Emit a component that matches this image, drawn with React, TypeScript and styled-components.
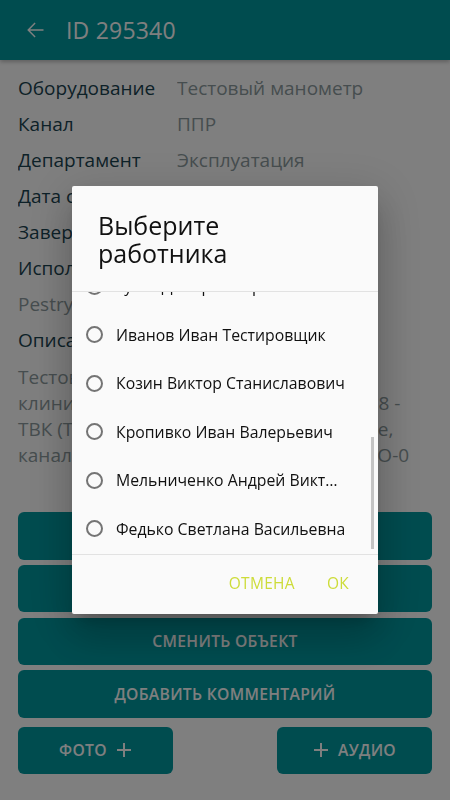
import React from 'react';
import styled, { createGlobalStyle } from 'styled-components';

const GlobalStyle = createGlobalStyle`
  html, body {
    margin: 0;
    padding: 0;
    background: #ffffff;
    overflow: hidden;
  }
  body {
    font-family: "Open Sans", "Noto Sans", sans-serif;
  }
`;

const Screen = styled.main`
  display: flex;
  flex-direction: column;
  height: 100vh;
  background: #ffffff;
`;

const TopBar = styled.header`
  display: flex;
  align-items: center;
  gap: 19px;
  height: 60px;
  padding: 0 0 0 23px;
  background: #00989f;
  color: #ffffff;
  box-shadow: 0 2px 4px rgba(0, 0, 0, 0.25);
  flex-shrink: 0;
`;

const Title = styled.h1`
  margin: 0;
  font-size: 23px;
  font-weight: 400;
  letter-spacing: 0.2px;
`;

const Details = styled.section`
  display: grid;
  grid-template-columns: 159px 1fr;
  grid-auto-rows: 36px;
  align-items: center;
  padding: 10px 18px 0;
`;

const Label = styled.div<{ $wide?: boolean }>`
  grid-column: ${(p) => (p.$wide ? '1 / -1' : 'auto')};
  font-size: 19px;
  color: #1a4350;
  white-space: nowrap;
  overflow: hidden;
`;

const Value = styled.div<{ $wide?: boolean }>`
  grid-column: ${(p) => (p.$wide ? '1 / -1' : 'auto')};
  font-size: 19px;
  color: #8d9b9e;
  white-space: nowrap;
  overflow: hidden;
  text-overflow: ellipsis;
`;

const Description = styled.p`
  margin: 6px 18px 0;
  font-size: 19px;
  line-height: 26px;
  color: #8d9b9e;
  white-space: nowrap;
`;

const Actions = styled.div`
  display: flex;
  flex-direction: column;
  gap: 5.25px;
  padding: 0 18px;
  margin-top: 44px;
`;

const ActionRow = styled.div`
  display: flex;
  justify-content: space-between;
  margin-top: 3.5px;
`;

const ActionButton = styled.button<{ $half?: boolean }>`
  display: flex;
  align-items: center;
  justify-content: center;
  gap: 9px;
  width: ${(p) => (p.$half ? '155px' : '100%')};
  height: 47.5px;
  border: none;
  border-radius: 6px;
  background: #00989f;
  color: #ffffff;
  font-family: "Open Sans", "Noto Sans", sans-serif;
  font-size: 15.7px;
  font-weight: 600;
  letter-spacing: 0.3px;
`;

const Overlay = styled.div`
  position: fixed;
  inset: 0;
  display: flex;
  align-items: center;
  justify-content: center;
  background: rgba(0, 0, 0, 0.5);
`;

const Dialog = styled.div`
  display: flex;
  flex-direction: column;
  width: 306px;
  height: 428px;
  background: #fafafa;
  border-radius: 2px;
  box-shadow: 0 11px 15px -7px rgba(0, 0, 0, 0.2), 0 24px 38px 3px rgba(0, 0, 0, 0.14),
    0 9px 46px 8px rgba(0, 0, 0, 0.12);
`;

const DialogTitle = styled.h2`
  margin: 0;
  padding: 25px 26px 24px;
  font-size: 25px;
  font-weight: 500;
  line-height: 28px;
  color: #111111;
  border-bottom: 1px solid #e2e2e2;
`;

const List = styled.div`
  position: relative;
  display: flex;
  flex-direction: column;
  justify-content: flex-end;
  height: 261px;
  padding-bottom: 1px;
  overflow: hidden;
  border-bottom: 1px solid #e2e2e2;
  flex-shrink: 0;
`;

const Item = styled.label`
  display: flex;
  align-items: center;
  gap: 13px;
  flex: 0 0 48.5px;
  padding: 0 31px 0 14px;
  font-size: 15.8px;
  font-weight: 500;
  color: #111111;
  min-width: 0;
`;

const Radio = styled.span`
  flex: 0 0 17px;
  width: 17px;
  height: 17px;
  box-sizing: border-box;
  border: 2px solid #747474;
  border-radius: 50%;
`;

const ItemText = styled.span`
  white-space: nowrap;
  overflow: hidden;
  text-overflow: ellipsis;
`;

const Thumb = styled.div`
  position: absolute;
  right: 4px;
  bottom: 5px;
  width: 3px;
  height: 112px;
  background: #c4c4c4;
`;

const DialogActions = styled.div`
  display: flex;
  justify-content: flex-end;
  align-items: center;
  gap: 32px;
  flex: 1;
  padding: 0 29px 3px 0;
`;

const TextButton = styled.button`
  border: none;
  background: none;
  padding: 0;
  font-family: "Open Sans", "Noto Sans", sans-serif;
  font-size: 15.5px;
  font-weight: 400;
  color: #cddc39;
  letter-spacing: 0.3px;
`;

const BackIcon = () => (
  <svg width="24" height="24" viewBox="0 0 24 24" fill="#ffffff">
    <path d="M20.5 11.2H7l5.6-5.6-1-1L4.2 12l7.4 7.4 1-1-5.6-5.6h13.5z" />
  </svg>
);

const PlusIcon = () => (
  <svg width="16" height="16" viewBox="0 0 16 16" stroke="#ffffff" strokeWidth="2">
    <path d="M8 1v14M1 8h14" />
  </svg>
);

const workers = [
  'Антонов Сергей Петрович',
  'Белов Олег Игоревич',
  'Васильев Павел Андреевич',
  'Гусев Дмитрий Юрьевич',
  'Иванов Иван Тестировщик',
  'Козин Виктор Станиславович',
  'Кропивко Иван Валерьевич',
  'Мельниченко Андрей Викторович',
  'Федько Светлана Васильевна',
];

const App = () => {
  return (
    <>
      <GlobalStyle />
      <Screen>
        <TopBar>
          <BackIcon />
          <Title>ID 295340</Title>
        </TopBar>
        <Details>
          <Label>Оборудование</Label>
          <Value>Тестовый манометр</Value>
          <Label>Канал</Label>
          <Value>ППР</Value>
          <Label>Департамент</Label>
          <Value>Эксплуатация</Value>
          <Label>Дата создания</Label>
          <Value>12.05.2021</Value>
          <Label>Завершить до</Label>
          <Value>20.05.2021</Value>
          <Label $wide>Исполнитель</Label>
          <Value $wide>Pestryakov Ivan</Value>
          <Label $wide>Описание</Label>
        </Details>
        <Description>
          Тестовая заявка для
          <br />
          клиники №3, корпус 2а, кабинет № 1158 -
          <br />
          ТВК (Тестовое оборудование) в порядке,
          <br />
          канал связи ППР, прибор: манометр МО-0
        </Description>
        <Actions>
          <ActionButton>ВЗЯТЬ В РАБОТУ</ActionButton>
          <ActionButton>НАЗНАЧИТЬ</ActionButton>
          <ActionButton>СМЕНИТЬ ОБЪЕКТ</ActionButton>
          <ActionButton>ДОБАВИТЬ КОММЕНТАРИЙ</ActionButton>
          <ActionRow>
            <ActionButton $half>
              ФОТО <PlusIcon />
            </ActionButton>
            <ActionButton $half>
              <PlusIcon /> АУДИО
            </ActionButton>
          </ActionRow>
        </Actions>
      </Screen>
      <Overlay>
        <Dialog>
          <DialogTitle>
            Выберите
            <br />
            работника
          </DialogTitle>
          <List>
            {workers.map((name) => (
              <Item key={name}>
                <Radio />
                <ItemText>{name}</ItemText>
              </Item>
            ))}
            <Thumb />
          </List>
          <DialogActions>
            <TextButton>ОТМЕНА</TextButton>
            <TextButton>ОК</TextButton>
          </DialogActions>
        </Dialog>
      </Overlay>
    </>
  );
};

export default App;
